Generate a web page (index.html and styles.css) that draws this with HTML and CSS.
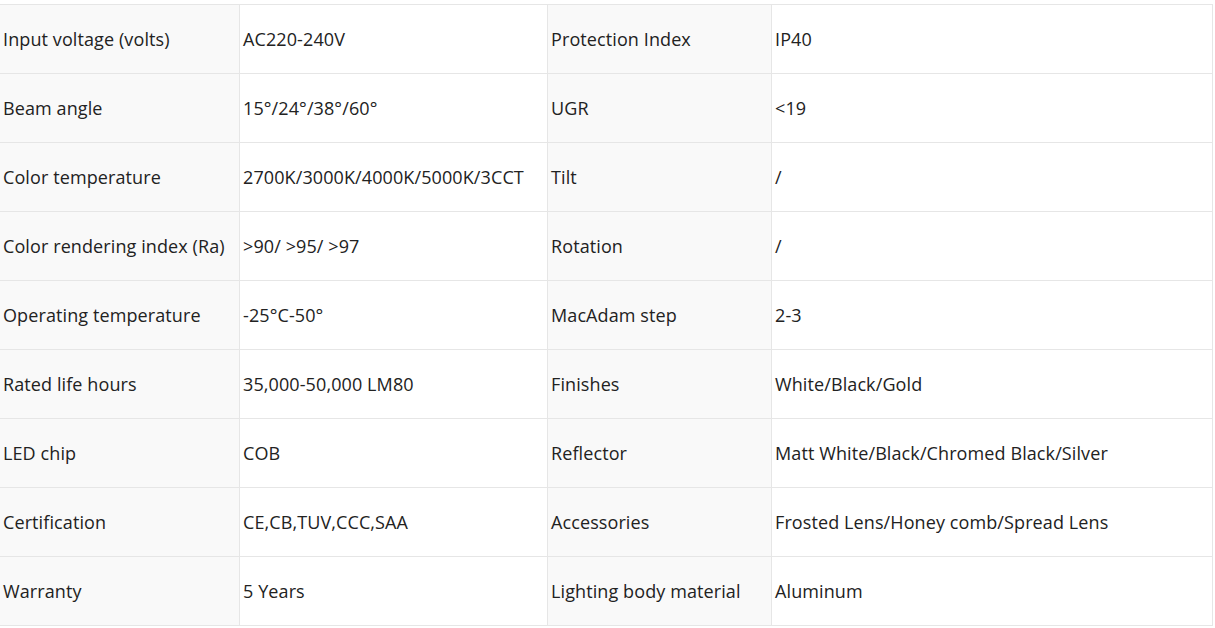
FILE: index.html
```html
<!DOCTYPE html>
<html>
<head>
<meta charset="utf-8">
<link rel="stylesheet" href="styles.css">
</head>
<body>
<table class="spec">
  <colgroup>
    <col class="c1"><col class="c2"><col class="c3"><col class="c4">
  </colgroup>
  <tbody>
    <tr><td class="k">Input voltage (volts)</td><td>AC220-240V</td><td class="k">Protection Index</td><td>IP40</td></tr>
    <tr><td class="k">Beam angle</td><td>15°/24°/38°/60°</td><td class="k">UGR</td><td>&lt;19</td></tr>
    <tr><td class="k">Color temperature</td><td>2700K/3000K/4000K/5000K/3CCT</td><td class="k">Tilt</td><td>/</td></tr>
    <tr><td class="k">Color rendering index (Ra)</td><td>&gt;90/ &gt;95/ &gt;97</td><td class="k">Rotation</td><td>/</td></tr>
    <tr><td class="k">Operating temperature</td><td>-25°C-50°</td><td class="k">MacAdam step</td><td>2-3</td></tr>
    <tr><td class="k">Rated life hours</td><td>35,000-50,000 LM80</td><td class="k">Finishes</td><td>White/Black/Gold</td></tr>
    <tr><td class="k">LED chip</td><td>COB</td><td class="k">Reflector</td><td>Matt White/Black/Chromed Black/Silver</td></tr>
    <tr><td class="k">Certification</td><td>CE,CB,TUV,CCC,SAA</td><td class="k">Accessories</td><td>Frosted Lens/Honey comb/Spread Lens</td></tr>
    <tr><td class="k">Warranty</td><td>5 Years</td><td class="k">Lighting body material</td><td>Aluminum</td></tr>
  </tbody>
</table>
</body>
</html>
```
FILE: styles.css
```css
html, body {
  margin: 0;
  padding: 0;
  background: #ffffff;
}
body {
  padding-top: 4px;
  font-family: "Open Sans", "Noto Sans", sans-serif;
  font-size: 18px;
  letter-spacing: 0.1px;
  color: #222222;
}
.spec {
  border-collapse: collapse;
  table-layout: fixed;
  width: 1212px;
  margin-left: -1px;
}
.spec .c1 { width: 240px; }
.spec .c2 { width: 308px; }
.spec .c3 { width: 224px; }
.spec .c4 { width: 441px; }
.spec td {
  border: 1px solid #e6e6e6;
  height: 69px;
  padding: 0 0 0 3px;
  box-sizing: border-box;
  vertical-align: middle;
  white-space: nowrap;
  overflow: hidden;
}
.spec td.k {
  background: #f9f9f9;
}
```
